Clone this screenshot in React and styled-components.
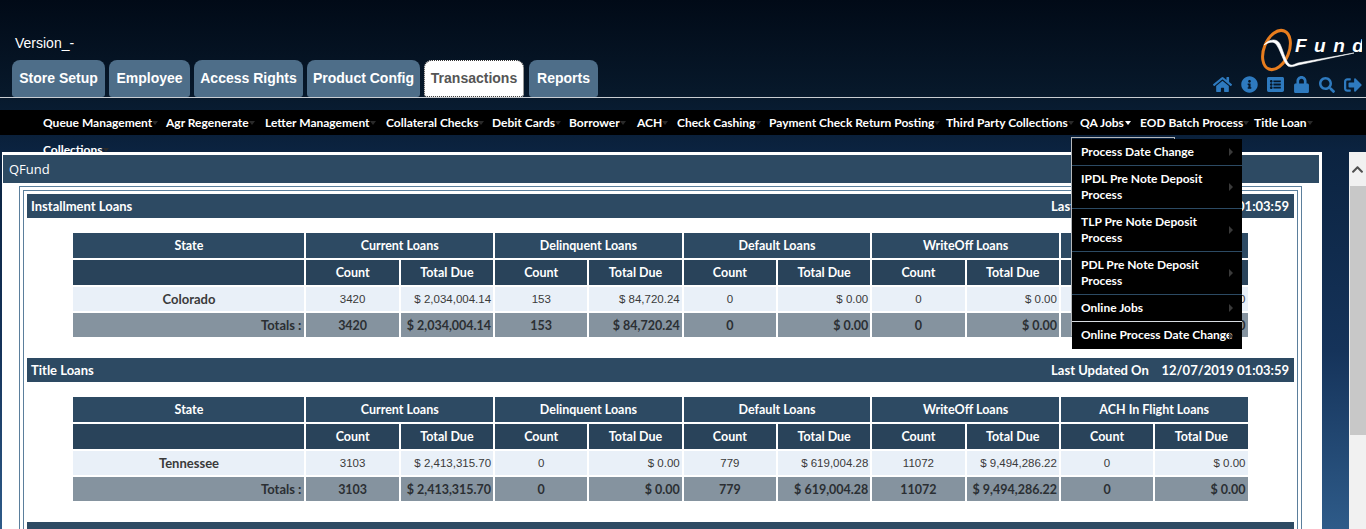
import styled, { createGlobalStyle } from 'styled-components'
import { FaHome, FaInfoCircle, FaListAlt, FaLock, FaSearch, FaSignOutAlt, FaChevronUp } from 'react-icons/fa'

const GlobalStyle = createGlobalStyle`
  html, body {
    margin: 0;
    height: 529px;
    overflow: hidden;
    font-family: "Liberation Sans", Arial, sans-serif;
  }
`

const tabs = [
   { label: 'Store Setup', w: 93 },
   { label: 'Employee', w: 81 },
   { label: 'Access Rights', w: 109 },
   { label: 'Product Config', w: 113 },
   { label: 'Transactions', w: 100, active: true },
   { label: 'Reports', w: 69 },
]

const navItems = [
   { label: 'Queue Management', w: 123 },
   { label: 'Agr Regenerate', w: 99 },
   { label: 'Letter Management', w: 121 },
   { label: 'Collateral Checks', w: 106 },
   { label: 'Debit Cards', w: 77 },
   { label: 'Borrower', w: 68 },
   { label: 'ACH', w: 40 },
   { label: 'Check Cashing', w: 92 },
   { label: 'Payment Check Return Posting', w: 177 },
   { label: 'Third Party Collections', w: 134 },
   { label: 'QA Jobs', w: 60, open: true },
   { label: 'EOD Batch Process', w: 114 },
   { label: 'Title Loan', w: 70 },
   { label: 'Collections', w: 70 },
]

const qaMenu = [
   'Process Date Change',
   'IPDL Pre Note Deposit Process',
   'TLP Pre Note Deposit Process',
   'PDL Pre Note Deposit Process',
   'Online Jobs',
   'Online Process Date Change',
]

const groups = ['Current Loans', 'Delinquent Loans', 'Default Loans', 'WriteOff Loans', 'ACH In Flight Loans']

const sections = [
   {
      title: 'Installment Loans',
      state: 'Colorado',
      values: ['3420', '$ 2,034,004.14', '153', '$ 84,720.24', '0', '$ 0.00', '0', '$ 0.00', '0', '$ 0.00'],
   },
   {
      title: 'Title Loans',
      state: 'Tennessee',
      values: ['3103', '$ 2,413,315.70', '0', '$ 0.00', '779', '$ 619,004.28', '11072', '$ 9,494,286.22', '0', '$ 0.00'],
   },
]

const Page = styled.div`
  height: 529px;
  overflow: hidden;
  background: linear-gradient(180deg, #010a17 0, #07182a 90px, #0b2340 150px, #15335a 350px, #2e5b89 529px);
`

const Header = styled.header`
  display: flex;
  justify-content: space-between;
  height: 97px;
  border-bottom: 1px solid #c9cdd2;
  margin-bottom: 12px;
`

const HeaderLeft = styled.div`
  padding: 35px 0 0 12px;
`

const Version = styled.div`
  height: 25px;
  padding-left: 3px;
  color: #fff;
  font-size: 14px;
  line-height: 17px;
`

const Tabs = styled.div`
  display: flex;
  gap: 4px;
`

const Tab = styled.a`
  box-sizing: border-box;
  width: ${p => p.$w}px;
  height: 37px;
  margin-right: ${p => (p.$active ? 1 : 0)}px;
  border-radius: 8px 8px 3px 3px;
  background: ${p => (p.$active ? '#fff' : '#4e6e89')};
  border: ${p => (p.$active ? '1px dotted #333' : 'none')};
  color: ${p => (p.$active ? '#555' : '#fff')};
  font-size: 14px;
  font-weight: 700;
  line-height: ${p => (p.$active ? 35 : 37)}px;
  text-align: center;
`

const HeaderRight = styled.div`
  display: flex;
  flex-direction: column;
  align-items: flex-end;
  padding: 28px 4px 0 0;
`

const Logo = styled.svg`
  display: block;
  width: 102px;
  height: 44px;
  margin-bottom: 4px;
`

const IconRow = styled.div`
  display: flex;
  align-items: center;
  gap: 9px;
  color: #2e7abf;
  font-size: 17px;
  height: 17px;
`

const NavBar = styled.nav`
  position: relative;
  z-index: 2;
  box-sizing: border-box;
  height: 42px;
  padding: 0 40px 0 43px;
  background: linear-gradient(180deg, #000 25px, transparent 25px);
`

const NavList = styled.ul`
  display: flex;
  flex-wrap: wrap;
  row-gap: 2px;
  margin: 0;
  padding: 0;
  list-style: none;
`

const NavItem = styled.li`
  position: relative;
  display: flex;
  align-items: center;
  width: ${p => p.$w}px;
  height: 25px;
  color: #fff;
  font-family: Lato, sans-serif;
  font-size: 12px;
  font-weight: 700;
  white-space: nowrap;
`

const Caret = styled.span`
  width: 0;
  height: 0;
  margin-left: ${p => (p.$open ? 1 : 0)}px;
  border-left: 3px solid transparent;
  border-right: 3px solid transparent;
  border-top: 4px solid ${p => (p.$open ? '#fff' : '#2a2a2a')};
`

const Dropdown = styled.ul`
  position: absolute;
  top: 29px;
  left: -8px;
  width: 170px;
  margin: 0;
  padding: 0;
  list-style: none;
  background: #000;
  white-space: normal;

  &::before {
    content: '';
    position: absolute;
    z-index: -1;
    top: -2px;
    left: -1px;
    width: 102px;
    height: 197px;
    border: 1px solid #b5b8bb;
  }
`

const DropdownItem = styled.li`
  position: relative;
  padding: 5px 8px 5px 9px;
  border-bottom: 1px solid ${p => (p.$light ? '#d8dde2' : '#2c4a63')};
  color: #fff;
  font-size: 12px;
  line-height: 16px;

  &:last-child {
    border-bottom: none;
    padding-bottom: 6px;
  }

  &::after {
    content: '';
    position: absolute;
    top: 50%;
    right: 9px;
    margin-top: -4px;
    border-left: 4px solid #3a3a3a;
    border-top: 4px solid transparent;
    border-bottom: 4px solid transparent;
  }
`

const Workspace = styled.div`
  display: flex;
  align-items: flex-start;
  height: 377px;
`

const Panel = styled.main`
  box-sizing: border-box;
  width: 1320px;
  height: 377px;
  margin-left: 2px;
  padding: 3px 3px 0 1px;
  overflow: hidden;
  background: #fff;
`

const PanelTitle = styled.div`
  height: 28px;
  padding-left: 6px;
  background: #2d4a63;
  color: #fff;
  font-family: "Open Sans", sans-serif;
  font-size: 13px;
  line-height: 28px;
`

const OuterFrame = styled.div`
  margin: 3px 17px 0 16px;
  padding: 3px;
  border: 1px solid #5b7f9c;
  border-bottom: none;
`

const InnerFrame = styled.div`
  padding: 3px;
  border: 1px solid #5b7f9c;
  border-bottom: none;
`

const SectionBar = styled.div`
  display: flex;
  justify-content: space-between;
  height: 24px;
  padding: 0 5px 0 4px;
  background: #2d4a63;
  color: #fff;
  font-family: Lato, sans-serif;
  font-size: 13px;
  font-weight: 700;
  line-height: 24px;
`

const Updated = styled.span`
  white-space: pre;
`

const Grid = styled.table`
  width: 1178px;
  margin: 13px auto 19px;
  border-collapse: separate;
  border-spacing: 2px;
  table-layout: fixed;
  font-size: 11px;
  color: #333;
`

const HeadCell = styled.th`
  height: 25px;
  padding: 0;
  background: ${p => (p.$dark ? '#29435a' : '#2d4a63')};
  color: #fff;
  font-family: Lato, sans-serif;
  font-size: 12.5px;
  font-weight: 700;
`

const Cell = styled.td`
  height: 24px;
  padding: 0 ${p => (p.$money ? 2 : 0)}px 0 0;
  background: ${p => (p.$total ? '#85939f' : '#e9f0f8')};
  color: ${p => (p.$total ? '#2b2f33' : '#3a3a3a')};
  font-family: ${p => (p.$total ? 'Lato, sans-serif' : '"Liberation Sans", sans-serif')};
  font-size: ${p => (p.$total ? 12.5 : 11.5)}px;
  font-weight: ${p => (p.$total ? 700 : 400)};
  text-align: ${p => (p.$money ? 'right' : 'center')};
`

const StateCell = styled(Cell)`
  padding-right: ${p => (p.$total ? 3 : 0)}px;
  font-family: Lato, sans-serif;
  font-size: 13px;
  font-weight: 700;
  text-align: ${p => (p.$total ? 'right' : 'center')};
`

const NextBar = styled.div`
  height: 24px;
  background: #2d4a63;
`

const Scrollbar = styled.div`
  width: 17px;
  height: 377px;
  margin-left: 27px;
  background: #f1f1f1;
`

const ScrollUp = styled.div`
  display: flex;
  align-items: center;
  justify-content: center;
  height: 34px;
  color: #505050;
  font-size: 13px;
`

const ScrollThumb = styled.div`
  height: 249px;
  margin-left: 1px;
  background: #c8c8c8;
`

const SummaryTable = ({ title, state, values }) => (
   <>
      <SectionBar>
         <span>{title}</span>
         <Updated>{'Last Updated On    12/07/2019 01:03:59'}</Updated>
      </SectionBar>
      <Grid>
         <colgroup>
            <col style={{ width: 231 }} />
            {values.map((_, i) => (
               <col key={i} style={{ width: 92.3 }} />
            ))}
         </colgroup>
         <thead>
            <tr>
               <HeadCell>State</HeadCell>
               {groups.map(g => (
                  <HeadCell key={g} colSpan={2}>
                     {g}
                  </HeadCell>
               ))}
            </tr>
            <tr>
               <HeadCell $dark />
               {groups.map(g => (
                  <>
                     <HeadCell $dark key={g + 'c'}>
                        Count
                     </HeadCell>
                     <HeadCell $dark key={g + 't'}>
                        Total Due
                     </HeadCell>
                  </>
               ))}
            </tr>
         </thead>
         <tbody>
            <tr>
               <StateCell>{state}</StateCell>
               {values.map((v, i) => (
                  <Cell key={i} $money={i % 2 === 1}>
                     {v}
                  </Cell>
               ))}
            </tr>
            <tr>
               <StateCell $total>Totals :</StateCell>
               {values.map((v, i) => (
                  <Cell key={i} $total $money={i % 2 === 1}>
                     {v}
                  </Cell>
               ))}
            </tr>
         </tbody>
      </Grid>
   </>
)

export default function App() {
   return (
      <Page>
         <GlobalStyle />
         <Header>
            <HeaderLeft>
               <Version>Version_-</Version>
               <Tabs>
                  {tabs.map(t => (
                     <Tab key={t.label} $w={t.w} $active={t.active}>
                        {t.label}
                     </Tab>
                  ))}
               </Tabs>
            </HeaderLeft>
            <HeaderRight>
               <Logo viewBox="0 0 102 44">
                  <ellipse cx="16.5" cy="22" rx="12.5" ry="20.5" fill="none" stroke="#e87d1e" strokeWidth="3" transform="rotate(22 16.5 22)" />
                  <path d="M4 17 C9 11 17 10 20 16 C23 22 25 32 29 36 C31 38 33 37 38 35 L94 25 L38 37 C32 39 29 40 26 36 C22 30 20 21 16 16 C13 13 9 14 4 17 Z" fill="#fff" stroke="#fff" strokeWidth="0.6" />
                  <text x="35" y="24" fill="#fff" fontFamily="Liberation Sans, sans-serif" fontSize="19" fontStyle="italic" fontWeight="700" letterSpacing="7.5">
                     Fund
                  </text>
               </Logo>
               <IconRow>
                  <FaHome size={19} />
                  <FaInfoCircle size={17} />
                  <FaListAlt size={17} />
                  <FaLock size={17} />
                  <FaSearch size={16} />
                  <FaSignOutAlt size={18} />
               </IconRow>
            </HeaderRight>
         </Header>
         <NavBar>
            <NavList>
               {navItems.map(item => (
                  <NavItem key={item.label} $w={item.w}>
                     {item.label}
                     <Caret $open={item.open} />
                     {item.open && (
                        <Dropdown>
                           {qaMenu.map((m, i) => (
                              <DropdownItem key={m} $light={i === 4}>
                                 {m}
                              </DropdownItem>
                           ))}
                        </Dropdown>
                     )}
                  </NavItem>
               ))}
            </NavList>
         </NavBar>
         <Workspace>
            <Panel>
               <PanelTitle>QFund</PanelTitle>
               <OuterFrame>
                  <InnerFrame>
                     {sections.map(s => (
                        <SummaryTable key={s.title} {...s} />
                     ))}
                     <NextBar />
                  </InnerFrame>
               </OuterFrame>
            </Panel>
            <Scrollbar>
               <ScrollUp>
                  <FaChevronUp />
               </ScrollUp>
               <ScrollThumb />
            </Scrollbar>
         </Workspace>
      </Page>
   )
}
